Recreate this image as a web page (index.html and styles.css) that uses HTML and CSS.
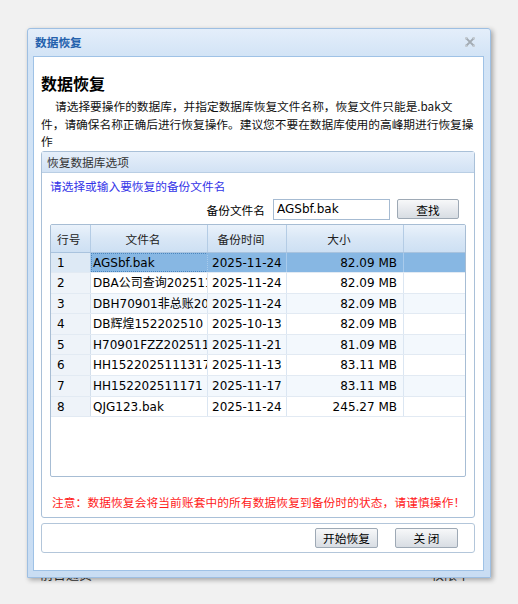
FILE: index.html
```html
<!DOCTYPE html>
<html lang="zh-CN">
<head>
<meta charset="utf-8">
<title>数据恢复</title>
<link rel="stylesheet" href="styles.css">
</head>
<body>
<div class="page">
  <div class="behind"><span class="b1">前台通员</span><span class="b2">权限率</span></div>
</div>
<div class="dialog">
  <div class="titlebar">
    <span class="title">数据恢复</span>
    <svg class="close" width="10" height="10" viewBox="0 0 10 10">
      <path d="M1.5 1.5 L8.5 8.5 M8.5 1.5 L1.5 8.5" stroke="#a3abb3" stroke-width="1.8" fill="none"/>
      <path d="M0.5 0.5h2M0.5 0.5v2M9.5 0.5h-2M9.5 0.5v2M0.5 9.5h2M0.5 9.5v-2M9.5 9.5h-2M9.5 9.5v-2" stroke="#c2c8ce" stroke-width="1" fill="none"/>
    </svg>
  </div>
  <div class="body">
    <h1 class="heading">数据恢复</h1>
    <p class="intro">请选择要操作的数据库，并指定数据库恢复文件名称，恢复文件只能是.bak文件，请确保名称正确后进行恢复操作。建议您不要在数据库使用的高峰期进行恢复操作</p>
    <div class="fieldset">
      <div class="legend">恢复数据库选项</div>
      <div class="fs-body">
        <div class="hint">请选择或输入要恢复的备份文件名</div>
        <div class="search">
          <span class="label">备份文件名</span>
          <input class="text" type="text" value="AGSbf.bak">
          <button class="btn find">查找</button>
        </div>
        <div class="grid">
          <div class="row head">
            <div class="cell num">行号</div>
            <div class="cell c">文件名</div>
            <div class="cell c">备份时间</div>
            <div class="cell c">大小</div>
            <div class="cell last"></div>
          </div>
          <div class="row sel">
            <div class="cell num">1</div>
            <div class="cell name focus">AGSbf.bak</div>
            <div class="cell date">2025-11-24</div>
            <div class="cell size">82.09 MB</div>
            <div class="cell last"></div>
          </div>
          <div class="row">
            <div class="cell num">2</div>
            <div class="cell name">DBA公司查询20251124.bak</div>
            <div class="cell date">2025-11-24</div>
            <div class="cell size">82.09 MB</div>
            <div class="cell last"></div>
          </div>
          <div class="row alt">
            <div class="cell num">3</div>
            <div class="cell name">DBH70901非总账20251124.bak</div>
            <div class="cell date">2025-11-24</div>
            <div class="cell size">82.09 MB</div>
            <div class="cell last"></div>
          </div>
          <div class="row">
            <div class="cell num">4</div>
            <div class="cell name">DB辉煌152202510 13.bak</div>
            <div class="cell date">2025-10-13</div>
            <div class="cell size">82.09 MB</div>
            <div class="cell last"></div>
          </div>
          <div class="row alt">
            <div class="cell num">5</div>
            <div class="cell name">H70901FZZ20251121.bak</div>
            <div class="cell date">2025-11-21</div>
            <div class="cell size">81.09 MB</div>
            <div class="cell last"></div>
          </div>
          <div class="row">
            <div class="cell num">6</div>
            <div class="cell name">HH1522025111317.bak</div>
            <div class="cell date">2025-11-13</div>
            <div class="cell size">83.11 MB</div>
            <div class="cell last"></div>
          </div>
          <div class="row alt">
            <div class="cell num">7</div>
            <div class="cell name">HH152202511171 7.bak</div>
            <div class="cell date">2025-11-17</div>
            <div class="cell size">83.11 MB</div>
            <div class="cell last"></div>
          </div>
          <div class="row">
            <div class="cell num">8</div>
            <div class="cell name">QJG123.bak</div>
            <div class="cell date">2025-11-24</div>
            <div class="cell size">245.27 MB</div>
            <div class="cell last"></div>
          </div>
        </div>
        <div class="warn">注意：数据恢复会将当前账套中的所有数据恢复到备份时的状态，请谨慎操作！</div>
      </div>
    </div>
    <div class="actions">
      <button class="btn">开始恢复</button>
      <button class="btn">关 闭</button>
    </div>
  </div>
</div>
</body>
</html>
```
FILE: styles.css
```css
* { box-sizing: border-box; }
html, body { margin: 0; padding: 0; }
body {
  background: #f1f1f1;
  font-family: "DejaVu Sans", "Noto Sans CJK SC", sans-serif;
  font-size: 12px;
  color: #000;
  width: 518px;
  height: 604px;
  overflow: hidden;
  position: relative;
}
.title, .heading, .intro, .legend, .hint, .label, .warn, .head .cell, .btn, .behind {
  font-family: "Noto Sans CJK SC", "DejaVu Sans", sans-serif;
  font-size: 11.7px;
}
.page {
  height: 604px;
  display: flex;
  flex-direction: column;
  justify-content: flex-end;
  padding-bottom: 22px;
}
.behind {
  display: flex;
  justify-content: space-between;
  padding: 0 48px 0 40px;
  font-size: 13px;
  line-height: 16px;
  color: #333;
}
.dialog {
  position: absolute;
  left: 27px;
  top: 28px;
  width: 464px;
  height: 550px;
  border: 1px solid #9ebfe2;
  border-radius: 3px 3px 0 0;
  background: linear-gradient(#e4eefa, #d3e4f6 26px, #c9ddf3);
  box-shadow: 2px 2px 5px rgba(0,0,0,0.32);
  display: flex;
  flex-direction: column;
  padding: 0 6px 6px 5px;
}
.titlebar {
  height: 27px;
  display: flex;
  align-items: center;
  justify-content: space-between;
  padding: 0 9px 2px 2px;
}
.title {
  font-weight: bold;
  color: #2461ad;
}
.close { display: block; }
.body {
  flex: 1;
  background: #fff;
  border: 1px solid #9fc2e6;
  padding: 0 8px 0 7px;
  display: flex;
  flex-direction: column;
}
.heading {
  margin: 14px 0 0;
  font-size: 16px;
  line-height: 24px;
  font-weight: bold;
}
.intro {
  margin: 2px 0 0;
  line-height: 17.5px;
  text-indent: 14px;
  color: #111;
}
.fieldset {
  margin-top: 1px;
  border: 1px solid #a9c0d8;
  border-radius: 3px;
}
.legend {
  height: 21px;
  line-height: 20px;
  padding-left: 5px;
  color: #333;
  background: linear-gradient(#e6effa, #d2e2f4);
  border-bottom: 1px solid #b9cee4;
}
.fs-body {
  padding: 0 8px 6px 8px;
}
.hint {
  margin-top: 4px;
  line-height: 18px;
  color: #3434e8;
}
.search {
  margin-top: 4px;
  display: flex;
  justify-content: flex-end;
  align-items: center;
  padding-right: 7px;
  height: 21px;
}
.label { margin-right: 8px; }
.text {
  width: 117px;
  height: 21px;
  border: 1px solid #a6bbd2;
  font: 12px "DejaVu Sans", sans-serif;
  padding: 0 3px;
  margin: 0 7px 0 0;
  color: #000;
}
.btn {
  width: 63px;
  height: 20px;
  margin: 0;
  border: 1px solid #9ea9b5;
  border-radius: 2px;
  background: linear-gradient(#f7f8f9, #e7eaee 50%, #d8dde3);
  color: #000;
  padding: 0;
}
.find { width: 62px; }
.grid {
  margin-top: 4px;
  height: 253px;
  border: 1px solid #a7bdd4;
  border-radius: 2px;
  background: #fff;
  overflow: hidden;
}
.row {
  display: grid;
  grid-template-columns: 40px 117px 79px 117px 1fr;
  height: 20.6px;
  border-bottom: 1px solid #e2eaf3;
  background: #fff;
}
.row.alt { background: #f3f8fd; }
.row.sel { background: #87b7e3; }
.row.head {
  height: 28px;
  background: linear-gradient(#eaf2fb, #d9e7f6 50%, #cde0f3);
  border-bottom: 1px solid #a9c3de;
}
.cell {
  border-right: 1px solid #dbe6f2;
  white-space: nowrap;
  overflow: hidden;
  line-height: 19.6px;
  padding-top: 1px;
}
.head .cell {
  line-height: 27px;
  padding-top: 0;
  border-right: 1px solid #b4cce5;
  color: #222;
}
.head .c { text-align: center; padding-right: 12px; }
.cell.last { border-right: 0; }
.num {
  padding-left: 6px;
  background: #eef3f9;
  border-right: 1px solid #d3dfec;
}
.head .num { background: transparent; }
.sel .num { background: #dde9f5; }
.name { padding-left: 2px; }
.sel .cell { border-right-color: #a9cbec; }
.focus { border: 1px dotted #4d86bd; line-height: 17.6px; padding-left: 1px; }
.date { padding-left: 4px; }
.size { text-align: right; padding-right: 6px; }
.warn {
  margin-top: 16px;
  padding-left: 2px;
  line-height: 18px;
  color: #ff1a1a;
  white-space: nowrap;
  letter-spacing: 0.12px;
}
.actions {
  margin-top: 5px;
  height: 30px;
  border: 1px solid #b3c6da;
  border-radius: 3px;
  display: flex;
  justify-content: flex-end;
  align-items: center;
  gap: 17px;
  padding-right: 16px;
}
```
